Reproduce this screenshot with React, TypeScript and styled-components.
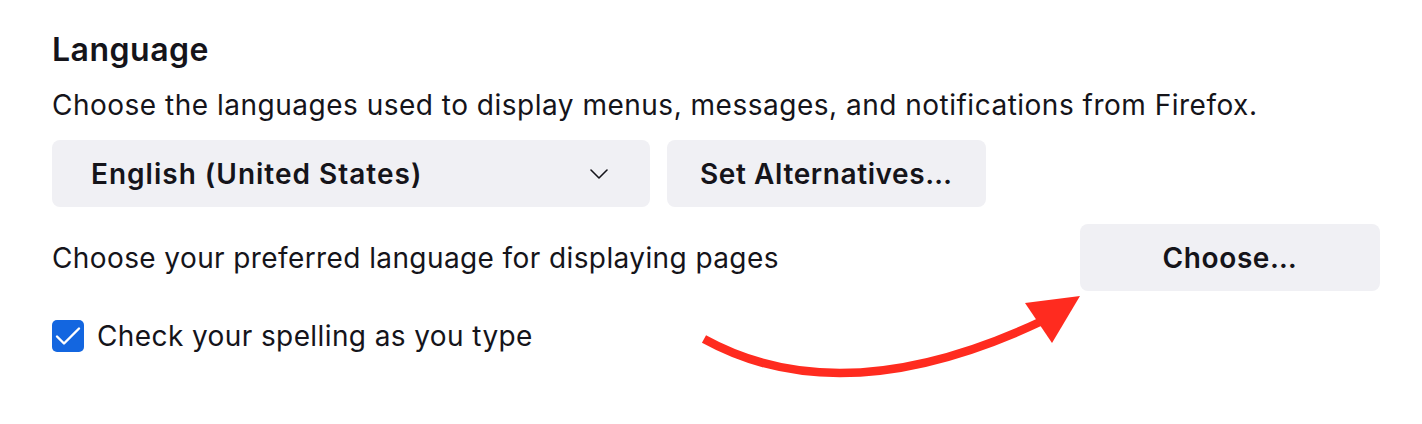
import * as React from 'react'
import styled, { createGlobalStyle } from 'styled-components'

const GlobalStyle = createGlobalStyle`
  html, body {
    margin: 0;
    padding: 0;
    background: #ffffff;
  }
  body {
    font-family: Inter, "Noto Sans", "Liberation Sans", sans-serif;
    color: #15141a;
  }
`

const Page = styled.div`
  position: relative;
  width: 1422px;
  height: 424px;
  box-sizing: border-box;
  padding: 30px 42px 0 52px;
  background: #ffffff;
`

const Heading = styled.h2`
  margin: 0 0 17px;
  font-size: 32px;
  line-height: 40px;
  font-weight: 600;
  letter-spacing: 0.5px;
`

const Description = styled.p`
  margin: 0 0 17px;
  font-size: 28px;
  line-height: 36px;
  font-weight: 400;
  letter-spacing: 0.5px;
`

const Row = styled.div<{ $spread?: boolean; $gap?: number }>`
  display: flex;
  align-items: center;
  justify-content: ${({ $spread }) => ($spread ? 'space-between' : 'flex-start')};
  gap: ${({ $gap }) => $gap ?? 0}px;
  margin-bottom: 17px;
`

const Select = styled.div`
  display: flex;
  align-items: center;
  justify-content: space-between;
  box-sizing: border-box;
  width: 598px;
  height: 67px;
  padding: 0 42px 0 39px;
  border-radius: 8px;
  background: #f0f0f4;
  font-size: 28px;
  font-weight: 600;
  letter-spacing: 1px;
`

const Button = styled.button<{ $width?: number }>`
  box-sizing: border-box;
  height: 67px;
  width: ${({ $width }) => ($width ? `${$width}px` : 'auto')};
  padding: 0 33px;
  border: none;
  border-radius: 8px;
  background: #f0f0f4;
  color: #15141a;
  font-family: inherit;
  font-size: 28px;
  font-weight: 600;
  letter-spacing: 0.6px;
  cursor: pointer;
`

const Label = styled.span`
  font-size: 28px;
  line-height: 36px;
  letter-spacing: 0.4px;
`

const CheckRow = styled.label`
  display: flex;
  align-items: center;
  gap: 13px;
  margin-top: 27px;
  font-size: 28px;
  line-height: 36px;
  letter-spacing: 0.4px;
`

const CheckBox = styled.span`
  display: inline-flex;
  align-items: center;
  justify-content: center;
  flex: none;
  width: 32px;
  height: 32px;
  border-radius: 5px;
  background: #1366e0;
`

const Overlay = styled.svg`
  position: absolute;
  left: 0;
  top: 0;
  pointer-events: none;
`

const Chevron = () => (
  <svg width="18" height="10" viewBox="0 0 18 10" fill="none">
    <path d="M1 1l8 8 8-8" stroke="#15141a" strokeWidth="1.6" strokeLinecap="round" strokeLinejoin="round" />
  </svg>
)

const Tick = () => (
  <svg width="26" height="20" viewBox="0 0 26 20" fill="none">
    <path d="M2 10.5l7 7L24 2.5" stroke="#ffffff" strokeWidth="2.4" strokeLinecap="round" strokeLinejoin="round" />
  </svg>
)

export default function App() {
  return (
    <Page>
      <GlobalStyle />
      <Heading>Language</Heading>
      <Description>
        Choose the languages used to display menus, messages, and notifications from Firefox.
      </Description>
      <Row $gap={17}>
        <Select>
          <span>English (United States)</span>
          <Chevron />
        </Select>
        <Button>Set Alternatives…</Button>
      </Row>
      <Row $spread>
        <Label>Choose your preferred language for displaying pages</Label>
        <Button $width={300}>Choose…</Button>
      </Row>
      <CheckRow>
        <CheckBox>
          <Tick />
        </CheckBox>
        Check your spelling as you type
      </CheckRow>
      <Overlay width="1422" height="424" viewBox="0 0 1422 424">
        <path d="M704 339 Q842 415 1042 321" stroke="#ff2b1f" strokeWidth="8.5" fill="none" />
        <polygon points="1025,303 1080,296 1052,343" fill="#ff2b1f" />
      </Overlay>
    </Page>
  )
}
